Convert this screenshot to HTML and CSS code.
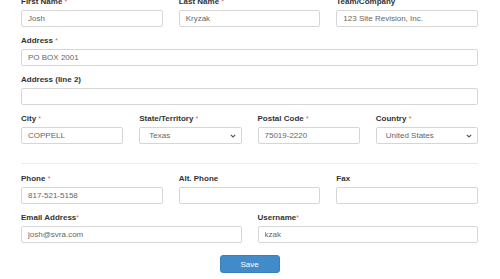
FILE: index.html
```html
<!DOCTYPE html>
<html lang="en">
<head>
  <meta charset="UTF-8">
  <title>Account Details</title>
  <link rel="stylesheet" href="styles.css">
</head>
<body>
  <form class="profile-form">
    <div class="form-row cols-3">
      <div class="field">
        <label>First Name <span class="req">*</span></label>
        <input type="text" value="Josh">
      </div>
      <div class="field">
        <label>Last Name <span class="req">*</span></label>
        <input type="text" value="Kryzak">
      </div>
      <div class="field">
        <label>Team/Company</label>
        <input type="text" value="123 Site Revision, Inc.">
      </div>
    </div>

    <div class="form-row">
      <div class="field">
        <label>Address <span class="req">*</span></label>
        <input type="text" value="PO BOX 2001">
      </div>
    </div>

    <div class="form-row">
      <div class="field">
        <label>Address (line 2)</label>
        <input type="text" value="">
      </div>
    </div>

    <div class="form-row cols-4">
      <div class="field">
        <label>City <span class="req">*</span></label>
        <input type="text" value="COPPELL">
      </div>
      <div class="field">
        <label>State/Territory <span class="req">*</span></label>
        <div class="select-wrap">
          <select>
            <option>Texas</option>
          </select>
          <svg class="chevron" width="6" height="4" viewBox="0 0 6 4"><path d="M0.8 0.8 L3 3 L5.2 0.8" fill="none" stroke="#555" stroke-width="1.1"/></svg>
        </div>
      </div>
      <div class="field">
        <label>Postal Code <span class="req">*</span></label>
        <input type="text" value="75019-2220">
      </div>
      <div class="field">
        <label>Country <span class="req">*</span></label>
        <div class="select-wrap">
          <select>
            <option>United States</option>
          </select>
          <svg class="chevron" width="6" height="4" viewBox="0 0 6 4"><path d="M0.8 0.8 L3 3 L5.2 0.8" fill="none" stroke="#555" stroke-width="1.1"/></svg>
        </div>
      </div>
    </div>

    <hr class="divider">

    <div class="form-row cols-3">
      <div class="field">
        <label>Phone <span class="req">*</span></label>
        <input type="tel" value="817-521-5158">
      </div>
      <div class="field">
        <label>Alt. Phone</label>
        <input type="tel" value="">
      </div>
      <div class="field">
        <label>Fax</label>
        <input type="tel" value="">
      </div>
    </div>

    <div class="form-row cols-2">
      <div class="field">
        <label>Email Address<span class="req">*</span></label>
        <input type="email" value="josh@svra.com">
      </div>
      <div class="field">
        <label>Username<span class="req">*</span></label>
        <input type="text" value="kzak">
      </div>
    </div>

    <div class="form-actions">
      <button type="submit" class="btn-save">Save</button>
    </div>
  </form>
</body>
</html>
```

FILE: styles.css
```css
:root {
  --primary: #428bca;
  --primary-border: #3a7fbd;
  --text: #333333;
  --input-text: #666666;
  --border: #d6d6d6;
  --required: #e06666;
  --divider: #eeeeee;
}

* {
  margin: 0;
  padding: 0;
  box-sizing: border-box;
  font-family: 'Liberation Sans', Arial, sans-serif;
}

body {
  background-color: #ffffff;
  color: var(--text);
}

.profile-form {
  margin-top: -3px;
  padding: 0 22px 0 21px;
}

.form-row {
  display: grid;
  grid-template-columns: 1fr;
  column-gap: 16px;
}

.form-row.cols-2 {
  grid-template-columns: repeat(2, 1fr);
}

.form-row.cols-3 {
  grid-template-columns: repeat(3, 1fr);
}

.form-row.cols-4 {
  grid-template-columns: repeat(4, 1fr);
}

.field {
  margin-bottom: 9px;
}

label {
  display: block;
  font-size: 8px;
  font-weight: 700;
  line-height: 10px;
  margin-bottom: 3px;
  color: var(--text);
}

.req {
  color: var(--required);
  font-weight: 400;
  font-size: 7px;
}

input,
select {
  display: block;
  width: 100%;
  height: 17px;
  padding: 0 6px;
  font-size: 8px;
  color: var(--input-text);
  background-color: #ffffff;
  border: 1px solid var(--border);
  border-radius: 2px;
}

.select-wrap {
  position: relative;
}

select {
  appearance: none;
  -webkit-appearance: none;
  padding: 0 14px 0 9px;
}

.chevron {
  position: absolute;
  right: 6px;
  top: 7px;
  pointer-events: none;
}

.divider {
  border: none;
  border-top: 1px solid var(--divider);
  margin: 10px 0 10px;
}

.form-actions {
  display: flex;
  justify-content: center;
  padding-top: 3px;
}

.btn-save {
  width: 60px;
  height: 18px;
  background-color: var(--primary);
  border: 1px solid var(--primary-border);
  border-radius: 3px;
  color: #ffffff;
  font-size: 8px;
  cursor: pointer;
}
```
